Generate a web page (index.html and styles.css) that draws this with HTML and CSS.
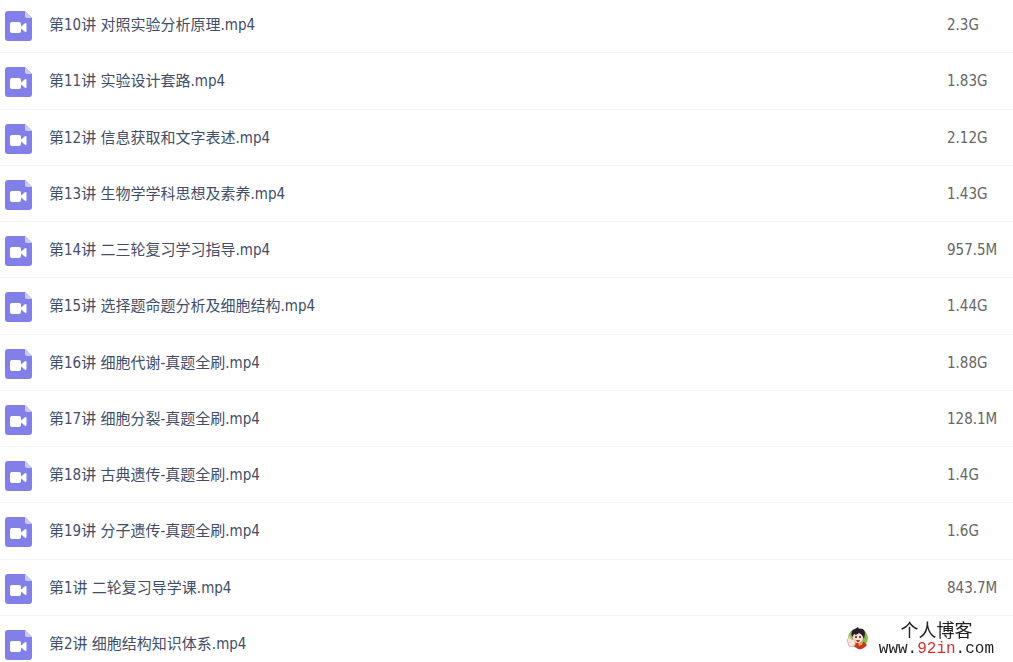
FILE: index.html
```
<!DOCTYPE html>
<html lang="zh-CN">
<head>
  <meta charset="UTF-8">
  <title>文件列表</title>
  <meta name="viewport" content="width=device-width, initial-scale=1" />
  <link rel="stylesheet" href="styles.css">
</head>
<body>
  <svg class="sprite" aria-hidden="true">
    <symbol id="video" viewBox="0 0 27 30">
      <path d="M3 0H20L27 7V27a3 3 0 0 1-3 3H3a3 3 0 0 1-3-3V3a3 3 0 0 1 3-3z" fill="#8280e8" />
      <path d="M20 0L27 7H22a2 2 0 0 1-2-2z" fill="#c9c9f8" />
      <rect x="5" y="11" width="11" height="11" rx="2" fill="#fff" />
      <path d="M16 15.500L20 12.200Q21.500 11.500 21.500 13V20Q21.500 21.500 20 20.800L16 17.500z" fill="#fff" />
    </symbol>
  </svg>

  <table class="files">
    <tbody>
      <tr><td class="icon"><svg><use href="#video" /></svg></td><td class="name">第10讲 对照实验分析原理.mp4</td><td class="size">2.3G</td></tr>
      <tr><td class="icon"><svg><use href="#video" /></svg></td><td class="name">第11讲 实验设计套路.mp4</td><td class="size">1.83G</td></tr>
      <tr><td class="icon"><svg><use href="#video" /></svg></td><td class="name">第12讲 信息获取和文字表述.mp4</td><td class="size">2.12G</td></tr>
      <tr><td class="icon"><svg><use href="#video" /></svg></td><td class="name">第13讲 生物学学科思想及素养.mp4</td><td class="size">1.43G</td></tr>
      <tr><td class="icon"><svg><use href="#video" /></svg></td><td class="name">第14讲 二三轮复习学习指导.mp4</td><td class="size">957.5M</td></tr>
      <tr><td class="icon"><svg><use href="#video" /></svg></td><td class="name">第15讲 选择题命题分析及细胞结构.mp4</td><td class="size">1.44G</td></tr>
      <tr><td class="icon"><svg><use href="#video" /></svg></td><td class="name">第16讲 细胞代谢-真题全刷.mp4</td><td class="size">1.88G</td></tr>
      <tr><td class="icon"><svg><use href="#video" /></svg></td><td class="name">第17讲 细胞分裂-真题全刷.mp4</td><td class="size">128.1M</td></tr>
      <tr><td class="icon"><svg><use href="#video" /></svg></td><td class="name">第18讲 古典遗传-真题全刷.mp4</td><td class="size">1.4G</td></tr>
      <tr><td class="icon"><svg><use href="#video" /></svg></td><td class="name">第19讲 分子遗传-真题全刷.mp4</td><td class="size">1.6G</td></tr>
      <tr><td class="icon"><svg><use href="#video" /></svg></td><td class="name">第1讲 二轮复习导学课.mp4</td><td class="size">843.7M</td></tr>
      <tr><td class="icon"><svg><use href="#video" /></svg></td><td class="name">第2讲 细胞结构知识体系.mp4</td><td class="size"></td></tr>
    </tbody>
  </table>

  <div class="watermark">
    <svg class="avatar" viewBox="0 0 24 24">
      <circle cx="13" cy="12" r="10" fill="#86bf4c" />
      <path d="M10 17l9-1 3 3q-4 5-9 4l-4-3z" fill="#c6351f" />
      <path d="M13 17l5-1-1 3-3 1z" fill="#f0a04a" />
      <ellipse cx="13" cy="11.500" rx="5" ry="5.500" fill="#f9dfd3" />
      <path d="M7 11Q5 4 10 3L13 1l1 2q6-1 6 5l-1 5-2-4-3-2-3 2-2-1z" fill="#2b1d2b" />
      <circle cx="11" cy="11" r="1" fill="#33202a" />
      <circle cx="15" cy="11" r="1" fill="#33202a" />
      <path d="M11 14h4q-1 3-3 2z" fill="#b8343a" />
      <path d="M2 14l3-4 1 3 4 1v5q-3 3-6 1z" fill="#f6e4d8" stroke="#d9b9a4" stroke-width="1" />
    </svg>
    <div class="mark-text">
      <div class="mark-name">个人博客</div>
      <div class="mark-url">www.<span>92in</span>.com</div>
    </div>
  </div>
</body>
</html>
```
FILE: styles.css
```
body { margin: 0; background: #fff; color: #424e67; font: 15px/20px "DejaVu Sans Condensed", "Noto Sans CJK SC", sans-serif; overflow: hidden; }
.sprite { position: absolute; width: 0; height: 0; }

.files { width: 100%; margin-top: -3px; border-collapse: separate; border-spacing: 0; table-layout: fixed; }
.files tr { height: 56px; }
.files tr:nth-child(4n+2) { height: 57px; }
.files td { padding: 0; border-bottom: 1px solid #f3f5f8; vertical-align: middle; }
.files .icon { width: 49px; }
.icon svg { display: block; width: 27px; height: 30px; margin: 2px 0 0 5px; }
.files .size { width: 66px; color: #666; }

.watermark { position: fixed; right: 19px; bottom: 4px; display: flex; align-items: center; gap: 10px; color: #222; }
.avatar { width: 24px; height: 24px; margin-bottom: 4px; }
.mark-text { text-align: center; }
.mark-name { font-size: 18px; line-height: 18px; }
.mark-url { font: 16px/18px "Liberation Mono", monospace; }
.mark-url span { color: #d9302c; }
```
